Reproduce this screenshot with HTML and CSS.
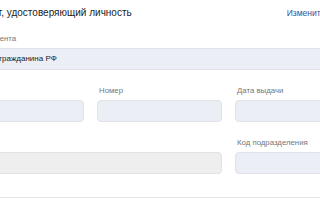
FILE: index.html
```html
<!DOCTYPE html>
<html lang="ru">
<head>
<meta charset="utf-8">
<link rel="stylesheet" href="styles.css">
</head>
<body>
<div class="page">
  <div class="header">
    <h2 class="title">Документ, удостоверяющий личность</h2>
    <a class="link" href="#">Изменить</a>
  </div>
  <div class="field">
    <div class="label">Тип документа</div>
    <div class="input lav">Паспорт гражданина РФ</div>
  </div>
  <div class="row row3">
    <div class="field">
      <div class="label">&nbsp;</div>
      <div class="input lav"></div>
    </div>
    <div class="field">
      <div class="label">Номер</div>
      <div class="input lav"></div>
    </div>
    <div class="field">
      <div class="label">Дата выдачи</div>
      <div class="input lav"></div>
    </div>
  </div>
  <div class="row row2">
    <div class="field">
      <div class="label">&nbsp;</div>
      <div class="input grey"></div>
    </div>
    <div class="field">
      <div class="label">Код подразделения</div>
      <div class="input lav"></div>
    </div>
  </div>
  <div class="divider"></div>
</div>
</body>
</html>
```
FILE: styles.css
```css
html, body {
  margin: 0;
  padding: 0;
  background: #ffffff;
  overflow: hidden;
}
body {
  font-family: "Liberation Sans", Arial, sans-serif;
  color: #222222;
}
.page {
  width: 364px;
  margin-left: -39px;
}
.header {
  display: flex;
  justify-content: space-between;
  align-items: baseline;
  padding-top: 7px;
  height: 24px;
}
.title {
  margin: 0 0 0 -3px;
  font-size: 10px;
  line-height: 12px;
  font-weight: normal;
  color: #222222;
}
.link {
  font-size: 8.5px;
  color: #34549e;
  text-decoration: none;
}
.field {
  display: flex;
  flex-direction: column;
  min-width: 0;
}
.label {
  font-size: 7.8px;
  color: #777777;
  line-height: 10px;
  margin-top: 3px;
  margin-bottom: 4px;
  padding-left: 2px;
  white-space: nowrap;
}
.input {
  height: 20px;
  border: 1px solid #e0e2e9;
  border-radius: 4px;
  font-size: 8px;
  line-height: 20px;
  padding: 0 4px;
  color: #222222;
  white-space: nowrap;
}
.lav {
  background: #eceef6;
}
.grey {
  background: #eeeeee;
  border-color: #e2e2e2;
}
.row {
  display: grid;
  column-gap: 13px;
  margin-top: 13px;
}
.row3 {
  grid-template-columns: 123px 125px 1fr;
}
.row2 {
  grid-template-columns: 261px 1fr;
}
.divider {
  margin-top: 23px;
  border-top: 1px solid #e4e4e4;
}
```
